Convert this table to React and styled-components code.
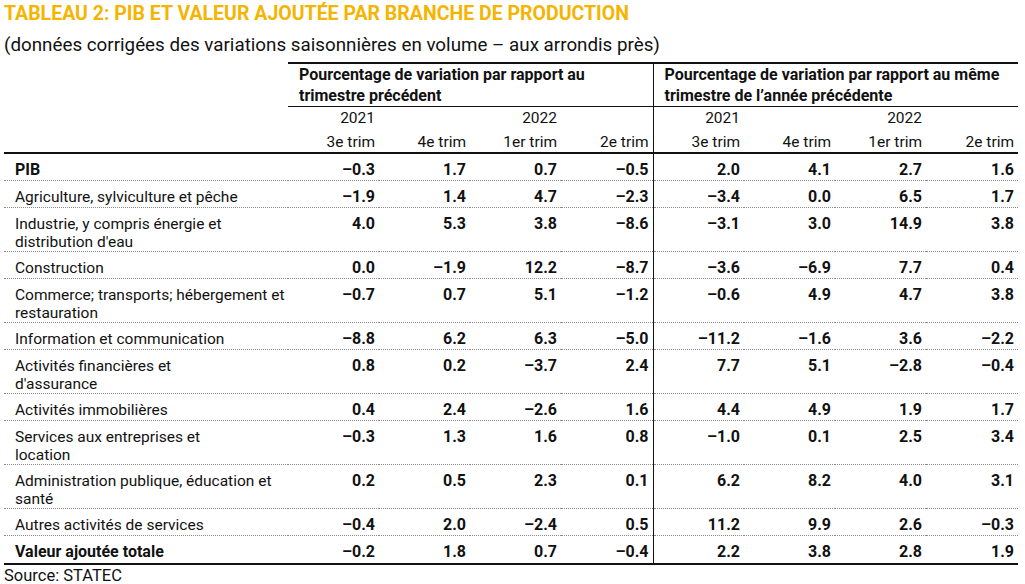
import React from "react";
import styled, { createGlobalStyle } from "styled-components";

const GlobalStyle = createGlobalStyle`
  html, body { margin: 0; padding: 0; background: #fff; }
  body { font-family: Roboto, "Liberation Sans", sans-serif; color: #111; }
`;

const Page = styled.div`
  width: 1025px;
  padding: 2px 7px 0 4px;
  box-sizing: border-box;
`;

const Title = styled.h1`
  margin: 0;
  font-size: 19.5px;
  line-height: 24px;
  font-weight: 700;
  color: #f5b400;
  white-space: nowrap;
`;

const Subtitle = styled.p`
  margin: 6px 0 4px;
  font-size: 18.8px;
  line-height: 26px;
  font-weight: 400;
  white-space: nowrap;
`;

const Table = styled.table`
  width: 1014px;
  border-collapse: collapse;
  table-layout: fixed;
`;

const Col = styled.col`
  width: ${(p) => p.$w}px;
`;

const GroupHead = styled.th`
  border-top: 2px solid #111;
  border-bottom: 1px solid #111;
  border-left: ${(p) => (p.$sep ? "1px solid #111" : "none")};
  padding: 0 8px 0 11px;
  text-align: left;
  font-size: 16px;
  font-weight: 700;
  line-height: 21px;
  vertical-align: top;
`;

const BlankHead = styled.th`
  padding: 0;
`;

const SubHead = styled.th`
  padding: ${(p) => (p.$last ? "1px 4px 0 0" : "1px 4px 3px 0")};
  text-align: right;
  font-weight: 400;
  font-size: 15.5px;
  line-height: 20px;
  white-space: nowrap;
  border-left: ${(p) => (p.$sep ? "1px solid #111" : "none")};
  border-bottom: ${(p) => (p.$last ? "2px solid #111" : "none")};
`;

const BodyRow = styled.tr`
  height: ${(p) => (p.$double ? 43.5 : p.$last ? 29 : 27)}px;
  border-bottom: ${(p) => (p.$last ? "2px solid #111" : "1px dotted #8a8a8a")};
`;

const Label = styled.td`
  padding: 7px 4px 0 11px;
  vertical-align: top;
  font-size: ${(p) => (p.$bold ? 16 : 15.5)}px;
  font-weight: ${(p) => (p.$bold ? 700 : 400)};
  line-height: 18px;
  white-space: nowrap;
`;

const Num = styled.td`
  padding: 7px 4px 0 0;
  vertical-align: top;
  text-align: right;
  font-size: 16px;
  font-weight: 700;
  line-height: 18px;
  white-space: nowrap;
  border-left: ${(p) => (p.$sep ? "1px solid #111" : "none")};
`;

const Source = styled.div`
  margin-top: 1px;
  font-size: 16.5px;
  line-height: 20px;
`;

const rows = [
  { label: ["PIB"], bold: true, v: ["–0.3", "1.7", "0.7", "–0.5", "2.0", "4.1", "2.7", "1.6"] },
  { label: ["Agriculture, sylviculture et pêche"], v: ["–1.9", "1.4", "4.7", "–2.3", "–3.4", "0.0", "6.5", "1.7"] },
  { label: ["Industrie, y compris énergie et", "distribution d'eau"], v: ["4.0", "5.3", "3.8", "–8.6", "–3.1", "3.0", "14.9", "3.8"] },
  { label: ["Construction"], v: ["0.0", "–1.9", "12.2", "–8.7", "–3.6", "–6.9", "7.7", "0.4"] },
  { label: ["Commerce; transports; hébergement et", "restauration"], v: ["–0.7", "0.7", "5.1", "–1.2", "–0.6", "4.9", "4.7", "3.8"] },
  { label: ["Information et communication"], v: ["–8.8", "6.2", "6.3", "–5.0", "–11.2", "–1.6", "3.6", "–2.2"] },
  { label: ["Activités financières et", "d'assurance"], v: ["0.8", "0.2", "–3.7", "2.4", "7.7", "5.1", "–2.8", "–0.4"] },
  { label: ["Activités immobilières"], v: ["0.4", "2.4", "–2.6", "1.6", "4.4", "4.9", "1.9", "1.7"] },
  { label: ["Services aux entreprises et", "location"], v: ["–0.3", "1.3", "1.6", "0.8", "–1.0", "0.1", "2.5", "3.4"] },
  { label: ["Administration publique, éducation et", "santé"], v: ["0.2", "0.5", "2.3", "0.1", "6.2", "8.2", "4.0", "3.1"] },
  { label: ["Autres activités de services"], v: ["–0.4", "2.0", "–2.4", "0.5", "11.2", "9.9", "2.6", "–0.3"] },
  { label: ["Valeur ajoutée totale"], bold: true, v: ["–0.2", "1.8", "0.7", "–0.4", "2.2", "3.8", "2.8", "1.9"] },
];

const years = ["2021", "", "2022", "", "2021", "", "2022", ""];
const trims = ["3e trim", "4e trim", "1er trim", "2e trim", "3e trim", "4e trim", "1er trim", "2e trim"];

export default function App() {
  return (
    <Page>
      <GlobalStyle />
      <Title>TABLEAU 2: PIB ET VALEUR AJOUTÉE PAR BRANCHE DE PRODUCTION</Title>
      <Subtitle>(données corrigées des variations saisonnières en volume – aux arrondis près)</Subtitle>
      <Table>
        <colgroup>
          <Col $w={284} />
          {[91, 91, 91, 92, 91, 91, 91, 92].map((w, i) => (
            <Col key={i} $w={w} />
          ))}
        </colgroup>
        <thead>
          <tr>
            <BlankHead />
            <GroupHead colSpan={4}>
              Pourcentage de variation par rapport au
              <br />
              trimestre précédent
            </GroupHead>
            <GroupHead colSpan={4} $sep>
              Pourcentage de variation par rapport au même
              <br />
              trimestre de l’année précédente
            </GroupHead>
          </tr>
          <tr>
            <BlankHead />
            {years.map((y, i) => (
              <SubHead key={i} $sep={i === 4}>
                {y}
              </SubHead>
            ))}
          </tr>
          <tr>
            <SubHead $last />
            {trims.map((t, i) => (
              <SubHead key={i} $sep={i === 4} $last>
                {t}
              </SubHead>
            ))}
          </tr>
        </thead>
        <tbody>
          {rows.map((r, ri) => (
            <BodyRow key={ri} $double={r.label.length > 1} $last={ri === rows.length - 1}>
              <Label $bold={r.bold}>
                {r.label.map((l, li) => (
                  <React.Fragment key={li}>
                    {li > 0 && <br />}
                    {l}
                  </React.Fragment>
                ))}
              </Label>
              {r.v.map((v, vi) => (
                <Num key={vi} $sep={vi === 4}>
                  {v}
                </Num>
              ))}
            </BodyRow>
          ))}
        </tbody>
      </Table>
      <Source>Source: STATEC</Source>
    </Page>
  );
}
